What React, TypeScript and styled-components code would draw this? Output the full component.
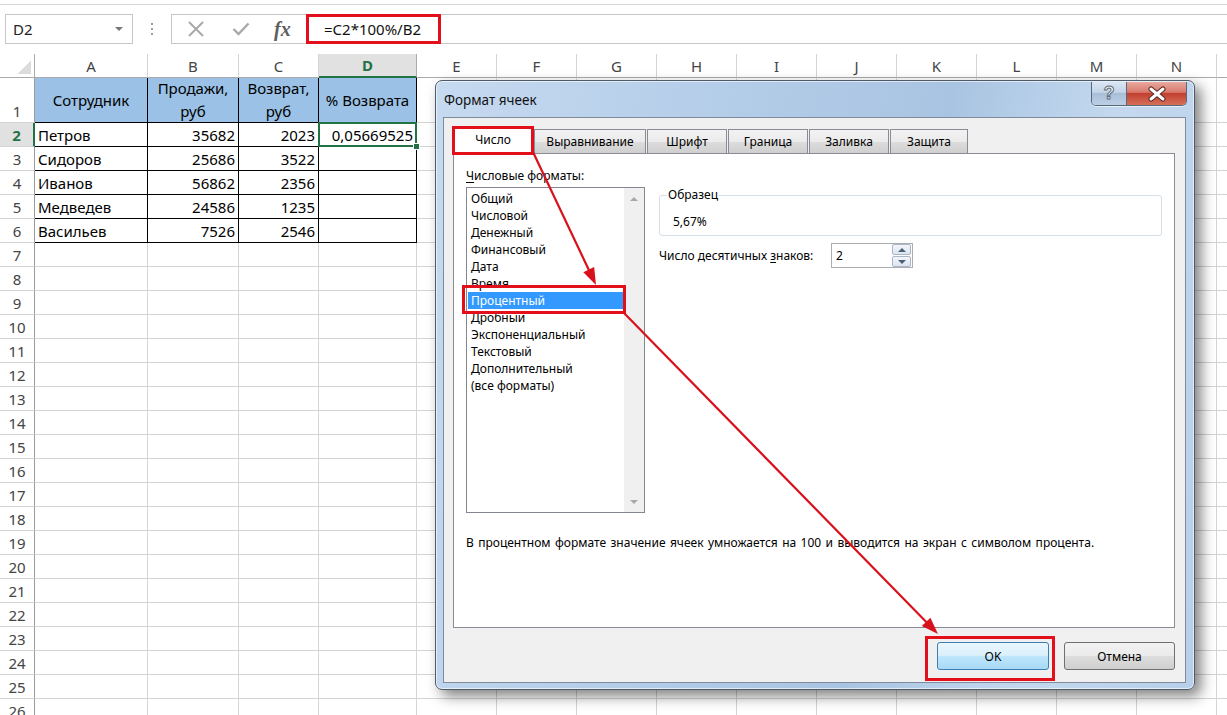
import React from "react";
import styled, { createGlobalStyle, css } from "styled-components";

const Global = createGlobalStyle`
  html, body { margin: 0; padding: 0; background: #ffffff; }
  body { font-family: "Noto Sans", "DejaVu Sans", sans-serif; }
  #root { position: relative; width: 1227px; height: 715px; overflow: hidden; }
`;

const Page = styled.div`
  position: relative;
  width: 1227px;
  height: 715px;
  overflow: hidden;
  display: flex;
  flex-direction: column;
  background: #fff;
`;

const TopStrip = styled.div`
  height: 4px;
  border-bottom: 1px solid #d6d6d6;
  flex: none;
`;

const FormulaBar = styled.div`
  display: flex;
  height: 30px;
  margin: 9px 0 10px 5px;
  flex: none;
`;

const NameBox = styled.div`
  box-sizing: border-box;
  width: 128px;
  height: 30px;
  border: 1px solid #c6c6c6;
  display: flex;
  align-items: center;
  justify-content: space-between;
  padding: 0 9px 0 7px;
  font-size: 15px;
  color: #222;
`;

const Caret = styled.span`
  width: 0;
  height: 0;
  border-left: 4px solid transparent;
  border-right: 4px solid transparent;
  border-top: 4px solid #777;
`;

const Dots = styled.div`
  width: 38px;
  display: flex;
  flex-direction: column;
  align-items: center;
  justify-content: center;
  gap: 3px;
  span {
    width: 2px;
    height: 2px;
    background: #9c9c9c;
  }
`;

const FxBox = styled.div`
  flex: 1;
  box-sizing: border-box;
  height: 30px;
  border: 1px solid #c6c6c6;
  border-right: none;
  display: flex;
  align-items: center;
`;

const FxIcons = styled.div`
  width: 135px;
  height: 100%;
  display: flex;
  align-items: center;
  padding-left: 15px;
  box-sizing: border-box;
  gap: 27px;
`;

const FxText = styled.span`
  font-family: "Liberation Serif", "DejaVu Serif", serif;
  font-style: italic;
  font-weight: bold;
  font-size: 20px;
  color: #5e5e5e;
  margin-left: -3px;
`;

const FormulaText = styled.div`
  padding-left: 17px;
  font-size: 15px;
  color: #111;
`;

/* ---------------- Sheet ---------------- */

const colWidths = [113, 91, 80, 98, 80, 80, 80, 80, 80, 80, 80, 80, 80, 80, 80];
const letters = "ABCDEFGHIJKLMN".split("").concat([""]);

const Sheet = styled.div`
  display: grid;
  grid-template-columns: 35px ${colWidths.map((w) => `${w}px`).join(" ")};
  grid-template-rows: 24px 45px;
  grid-auto-rows: 24px;
  font-size: 15px;
  color: #000;
`;

const baseCell = css`
  box-sizing: border-box;
  border-right: 1px solid #d4d4d4;
  border-bottom: 1px solid #d4d4d4;
  display: flex;
  overflow: visible;
  white-space: nowrap;
`;

const Corner = styled.div`
  ${baseCell};
  border-right-color: #ababab;
  border-bottom-color: #ababab;
  background: linear-gradient(135deg, transparent 50%, #dcdcdc 50%) no-repeat right 3px bottom 3px / 13px 13px;
`;

const ColHead = styled.div<{ $sel?: boolean }>`
  ${baseCell};
  align-items: center;
  justify-content: center;
  color: #444;
  border-bottom-color: #ababab;
  ${(p) =>
    p.$sel &&
    css`
      background: #e1e1e1;
      color: #217346;
      font-weight: bold;
      border-bottom: 2px solid #217346;
      border-right-color: #ababab;
    `}
`;

const RowHead = styled.div<{ $sel?: boolean; $bottom?: boolean }>`
  ${baseCell};
  border-right-color: #9b9b9b;
  justify-content: center;
  align-items: ${(p) => (p.$bottom ? "flex-end" : "center")};
  padding-bottom: ${(p) => (p.$bottom ? "1px" : "0")};
  color: #444;
  ${(p) =>
    p.$sel &&
    css`
      background: #e1e1e1;
      color: #217346;
      font-weight: bold;
      border-right: 2px solid #217346;
    `}
`;

const Cell = styled.div<{ $table?: boolean; $head?: boolean; $right?: boolean; $sel?: boolean }>`
  ${baseCell};
  position: relative;
  align-items: center;
  padding: 0 3px;
  justify-content: ${(p) => (p.$head ? "center" : p.$right ? "flex-end" : "flex-start")};
  text-align: center;
  ${(p) =>
    p.$table &&
    css`
      border-right-color: #000;
      border-bottom-color: #000;
    `}
  ${(p) =>
    p.$head &&
    css`
      background: #9bc2e6;
      white-space: normal;
      line-height: 23px;
    `}
  ${(p) =>
    p.$sel &&
    css`
      &::after {
        content: "";
        position: absolute;
        left: -1px;
        top: -1px;
        right: -1px;
        bottom: -1px;
        border: 2px solid #217346;
        pointer-events: none;
      }
      &::before {
        content: "";
        position: absolute;
        right: -4px;
        bottom: -4px;
        width: 5px;
        height: 5px;
        background: #217346;
        border: 1px solid #fff;
        z-index: 2;
      }
    `}
`;

const tableData: string[][] = [
  ["Сотрудник", "Продажи, руб", "Возврат, руб", "% Возврата"],
  ["Петров", "35682", "2023", "0,05669525"],
  ["Сидоров", "25686", "3522", ""],
  ["Иванов", "56862", "2356", ""],
  ["Медведев", "24586", "1235", ""],
  ["Васильев", "7526", "2546", ""],
];

function SheetGrid() {
  const rows: React.ReactNode[] = [];
  rows.push(<Corner key="corner" />);
  letters.forEach((l, i) => rows.push(<ColHead key={`h${i}`} $sel={i === 3}>{l}</ColHead>));
  for (let r = 1; r <= 26; r++) {
    rows.push(
      <RowHead key={`r${r}`} $sel={r === 2} $bottom={r === 1}>
        {r}
      </RowHead>
    );
    letters.forEach((_, c) => {
      const inTable = r <= 6 && c <= 3;
      const text = inTable ? tableData[r - 1][c] : "";
      rows.push(
        <Cell
          key={`${c}-${r}`}
          $table={inTable}
          $head={inTable && r === 1}
          $right={inTable && c > 0}
          $sel={r === 2 && c === 3}
        >
          {text}
        </Cell>
      );
    });
  }
  return <Sheet>{rows}</Sheet>;
}

/* ---------------- Dialog ---------------- */

const Dialog = styled.div`
  position: absolute;
  left: 435px;
  top: 80px;
  width: 760px;
  height: 610px;
  box-sizing: border-box;
  border: 1px solid #4e5a68;
  border-radius: 7px;
  background: linear-gradient(100deg, #c6daf0 0%, #b3cce8 35%, #a9c4e2 60%, #c4d9ef 80%, #b7cfe9 100%);
  box-shadow: 6px 6px 14px rgba(0, 0, 0, 0.5), inset 0 0 0 1px rgba(255, 255, 255, 0.6);
  display: flex;
  flex-direction: column;
  padding: 0 8px 6px 7px;
  font-size: 12px;
  color: #000;
  z-index: 5;
`;

const TitleBar = styled.div`
  height: 36px;
  display: flex;
  justify-content: space-between;
  align-items: flex-start;
  flex: none;
`;

const Title = styled.div`
  padding: 10px 0 0 1px;
  font-size: 13.5px;
  line-height: 18px;
  color: #111;
`;

const CaptionButtons = styled.div`
  display: flex;
  margin: 1px -1px 0 0;
  border: 1px solid #59697c;
  border-top: none;
  border-radius: 0 0 5px 5px;
  overflow: hidden;
  box-shadow: 0 1px 0 rgba(255, 255, 255, 0.6);
`;

const HelpButton = styled.div`
  width: 34px;
  height: 23px;
  display: flex;
  align-items: center;
  justify-content: center;
  border-right: 1px solid #59697c;
  background: linear-gradient(#dbe6f3 0%, #c3d4e8 45%, #a9bfd9 50%, #bccfe5 100%);
  font-family: "Liberation Sans", sans-serif;
  font-weight: bold;
  font-size: 18px;
  color: #f4f6f8;
  -webkit-text-stroke: 1px #5f6b78;
`;

const CloseButton = styled.div`
  width: 59px;
  height: 23px;
  display: flex;
  align-items: center;
  justify-content: center;
  background: linear-gradient(#e9a99f 0%, #d8786b 45%, #c2402f 50%, #d5705b 100%);
`;

const Client = styled.div`
  flex: 1;
  background: #f0f0f0;
  border: 1px solid #7d8b9c;
  display: flex;
  flex-direction: column;
  padding: 8px 10px 0 9px;
`;

const TabStrip = styled.div`
  display: flex;
  align-items: flex-end;
  height: 28px;
  margin-bottom: -1px;
  position: relative;
  z-index: 1;
`;

const Tab = styled.div<{ $w: number; $active?: boolean }>`
  box-sizing: border-box;
  width: ${(p) => p.$w}px;
  height: 24px;
  margin-bottom: 1px;
  border: 1px solid #898c95;
  border-bottom: none;
  margin-right: 1px;
  display: flex;
  align-items: center;
  justify-content: center;
  background: linear-gradient(#f2f2f2 0%, #ebebeb 50%, #dddddd 51%, #cfcfcf 100%);
  color: #000;
  ${(p) =>
    p.$active &&
    css`
      height: 28px;
      margin-bottom: 0;
      background: #fff;
      padding-bottom: 3px;
    `}
`;

const Panel = styled.div`
  box-sizing: border-box;
  height: 475px;
  border: 1px solid #898c95;
  background: #fff;
  display: flex;
  flex-direction: column;
  padding: 14px 12px 0 12px;
`;

const Body = styled.div`
  display: flex;
`;

const LeftCol = styled.div`
  width: 179px;
  display: flex;
  flex-direction: column;
`;

const Label = styled.div`
  line-height: 16px;
  height: 16px;
  margin-bottom: 3px;
  u {
    text-decoration: underline;
    text-underline-offset: 2px;
  }
`;

const ListBox = styled.div`
  box-sizing: border-box;
  height: 326px;
  border: 1px solid #828790;
  display: flex;
`;

const Items = styled.div`
  flex: 1;
  padding: 2px 1px 0 1px;
`;

const Item = styled.div<{ $sel?: boolean }>`
  height: 17px;
  line-height: 17px;
  padding-left: 3px;
  ${(p) =>
    p.$sel &&
    css`
      background: #3399ff;
      color: #fff;
    `}
`;

const ScrollTrack = styled.div`
  width: 20px;
  background: #f0f0f0;
  display: flex;
  flex-direction: column;
  justify-content: space-between;
  align-items: center;
  padding: 9px 0 8px;
  box-sizing: border-box;
`;

const Tri = styled.span<{ $down?: boolean }>`
  width: 0;
  height: 0;
  border-left: 4px solid transparent;
  border-right: 4px solid transparent;
  ${(p) =>
    p.$down
      ? css`
          border-top: 4px solid #a8a8a8;
        `
      : css`
          border-bottom: 4px solid #a8a8a8;
        `}
`;

const RightCol = styled.div`
  flex: 1;
  margin-left: 14px;
  margin-right: 0;
  padding-top: 19px;
  display: flex;
  flex-direction: column;
`;

const Group = styled.fieldset`
  margin: 0;
  border: 1px solid #d5dfe5;
  border-radius: 3px;
  padding: 11px 13px 5px;
  legend {
    padding: 0 1px;
    margin-left: -6px;
    line-height: 16px;
    font-size: 12px;
  }
`;

const GroupValue = styled.div`
  line-height: 16px;
`;

const SpinRow = styled.div`
  display: flex;
  align-items: center;
  margin-top: 7px;
  height: 25px;
`;

const SpinLabel = styled.div`
  width: 172px;
  u {
    text-decoration: underline;
    text-underline-offset: 2px;
  }
`;

const SpinBox = styled.div`
  box-sizing: border-box;
  width: 82px;
  height: 25px;
  border: 1px solid #abadb3;
  display: flex;
  align-items: center;
  justify-content: space-between;
  padding-left: 4px;
`;

const SpinButtons = styled.div`
  width: 19px;
  height: 23px;
  display: flex;
  flex-direction: column;
  gap: 1px;
  margin-right: 1px;
`;

const SpinBtn = styled.div<{ $down?: boolean }>`
  flex: 1;
  border: 1px solid #aab7c9;
  border-radius: 2px;
  background: linear-gradient(#f3f6fa, #dde5ef);
  display: flex;
  align-items: center;
  justify-content: center;
  &::after {
    content: "";
    width: 0;
    height: 0;
    border-left: 4px solid transparent;
    border-right: 4px solid transparent;
    ${(p) =>
      p.$down
        ? css`
            border-top: 4px solid #4c607a;
          `
        : css`
            border-bottom: 4px solid #4c607a;
          `}
  }
`;

const Description = styled.div`
  margin-top: 22px;
  line-height: 16px;
  word-spacing: 1.3px;
`;

const ButtonRow = styled.div`
  display: flex;
  justify-content: flex-end;
  gap: 15px;
  margin-top: 14px;
`;

const DlgButton = styled.div<{ $primary?: boolean }>`
  box-sizing: border-box;
  width: ${(p) => (p.$primary ? 112 : 111)}px;
  height: 28px;
  border-radius: 3px;
  display: flex;
  align-items: center;
  justify-content: center;
  ${(p) =>
    p.$primary
      ? css`
          border: 1px solid #3c7fb1;
          background: linear-gradient(#eaf6fd 0%, #d9f0fc 48%, #bee6fd 52%, #a7d9f5 100%);
        `
      : css`
          border: 1px solid #707070;
          background: linear-gradient(#f2f2f2 0%, #ebebeb 48%, #dddddd 52%, #cfcfcf 100%);
        `}
`;

/* ---------------- Annotations ---------------- */

const RedBox = styled.div<{ $x: number; $y: number; $w: number; $h: number }>`
  position: absolute;
  left: ${(p) => p.$x}px;
  top: ${(p) => p.$y}px;
  width: ${(p) => p.$w}px;
  height: ${(p) => p.$h}px;
  box-sizing: border-box;
  border: 3px solid #e3101b;
  pointer-events: none;
  z-index: 10;
`;

const Overlay = styled.svg`
  position: absolute;
  left: 0;
  top: 0;
  width: 1227px;
  height: 715px;
  pointer-events: none;
  z-index: 11;
`;

function Arrow({ x1, y1, x2, y2 }: { x1: number; y1: number; x2: number; y2: number }) {
  const dx = x2 - x1;
  const dy = y2 - y1;
  const len = Math.hypot(dx, dy);
  const ux = dx / len;
  const uy = dy / len;
  const hl = 17;
  const hw = 6;
  const bx = x2 - ux * hl;
  const by = y2 - uy * hl;
  const pts = `${x2},${y2} ${bx - uy * hw},${by + ux * hw} ${bx + uy * hw},${by - ux * hw}`;
  return (
    <g>
      <line x1={x1} y1={y1} x2={bx + ux * 2} y2={by + uy * 2} stroke="#d8121c" strokeWidth={2.2} />
      <polygon points={pts} fill="#d8121c" />
    </g>
  );
}

const formats = [
  "Общий",
  "Числовой",
  "Денежный",
  "Финансовый",
  "Дата",
  "Время",
  "Процентный",
  "Дробный",
  "Экспоненциальный",
  "Текстовый",
  "Дополнительный",
  "(все форматы)",
];

const tabs: { label: string; w: number }[] = [
  { label: "Число", w: 80 },
  { label: "Выравнивание", w: 112 },
  { label: "Шрифт", w: 80 },
  { label: "Граница", w: 80 },
  { label: "Заливка", w: 80 },
  { label: "Защита", w: 78 },
];

function XIcon() {
  return (
    <svg width="18" height="18" viewBox="0 0 18 18">
      <path d="M2 2 L16 16 M16 2 L2 16" stroke="#a9a9a9" strokeWidth="2" fill="none" />
    </svg>
  );
}

function CheckIcon() {
  return (
    <svg width="18" height="14" viewBox="0 0 18 14">
      <path d="M1.5 7 L6.5 12 L16.5 1.5" stroke="#a9a9a9" strokeWidth="2.4" fill="none" />
    </svg>
  );
}

function CloseGlyph() {
  return (
    <svg width="20" height="16" viewBox="0 0 20 16">
      <path d="M4 3 L16 13 M16 3 L4 13" stroke="#5a2a24" strokeWidth="5" strokeLinecap="round" fill="none" />
      <path d="M4 3 L16 13 M16 3 L4 13" stroke="#ffffff" strokeWidth="3" strokeLinecap="round" fill="none" />
    </svg>
  );
}

export default function App() {
  return (
    <Page>
      <Global />
      <TopStrip />
      <FormulaBar>
        <NameBox>
          D2
          <Caret />
        </NameBox>
        <Dots>
          <span />
          <span />
          <span />
        </Dots>
        <FxBox>
          <FxIcons>
            <XIcon />
            <CheckIcon />
            <FxText>fx</FxText>
          </FxIcons>
          <FormulaText>=C2*100%/B2</FormulaText>
        </FxBox>
      </FormulaBar>
      <SheetGrid />

      <Dialog>
        <TitleBar>
          <Title>Формат ячеек</Title>
          <CaptionButtons>
            <HelpButton>?</HelpButton>
            <CloseButton>
              <CloseGlyph />
            </CloseButton>
          </CaptionButtons>
        </TitleBar>
        <Client>
          <TabStrip>
            {tabs.map((t, i) => (
              <Tab key={t.label} $w={t.w} $active={i === 0}>
                {t.label}
              </Tab>
            ))}
          </TabStrip>
          <Panel>
            <Body>
              <LeftCol>
                <Label>
                  <u>Ч</u>исловые форматы:
                </Label>
                <ListBox>
                  <Items>
                    {formats.map((f) => (
                      <Item key={f} $sel={f === "Процентный"}>
                        {f}
                      </Item>
                    ))}
                  </Items>
                  <ScrollTrack>
                    <Tri />
                    <Tri $down />
                  </ScrollTrack>
                </ListBox>
              </LeftCol>
              <RightCol>
                <Group>
                  <legend>Образец</legend>
                  <GroupValue>5,67%</GroupValue>
                </Group>
                <SpinRow>
                  <SpinLabel>
                    Число десятичных <u>з</u>наков:
                  </SpinLabel>
                  <SpinBox>
                    2
                    <SpinButtons>
                      <SpinBtn />
                      <SpinBtn $down />
                    </SpinButtons>
                  </SpinBox>
                </SpinRow>
              </RightCol>
            </Body>
            <Description>
              В процентном формате значение ячеек умножается на 100 и выводится на экран с символом процента.
            </Description>
          </Panel>
          <ButtonRow>
            <DlgButton $primary>OK</DlgButton>
            <DlgButton>Отмена</DlgButton>
          </ButtonRow>
        </Client>
      </Dialog>

      <RedBox $x={306} $y={14} $w={135} $h={30} />
      <RedBox $x={452} $y={126} $w={82} $h={29} />
      <RedBox $x={462} $y={285} $w={164} $h={29} />
      <RedBox $x={925} $y={636} $w={130} $h={45} />

      <Overlay viewBox="0 0 1227 715">
        <Arrow x1={533} y1={152} x2={596} y2={285} />
        <Arrow x1={624} y1={313} x2={938} y2={634} />
      </Overlay>
    </Page>
  );
}
